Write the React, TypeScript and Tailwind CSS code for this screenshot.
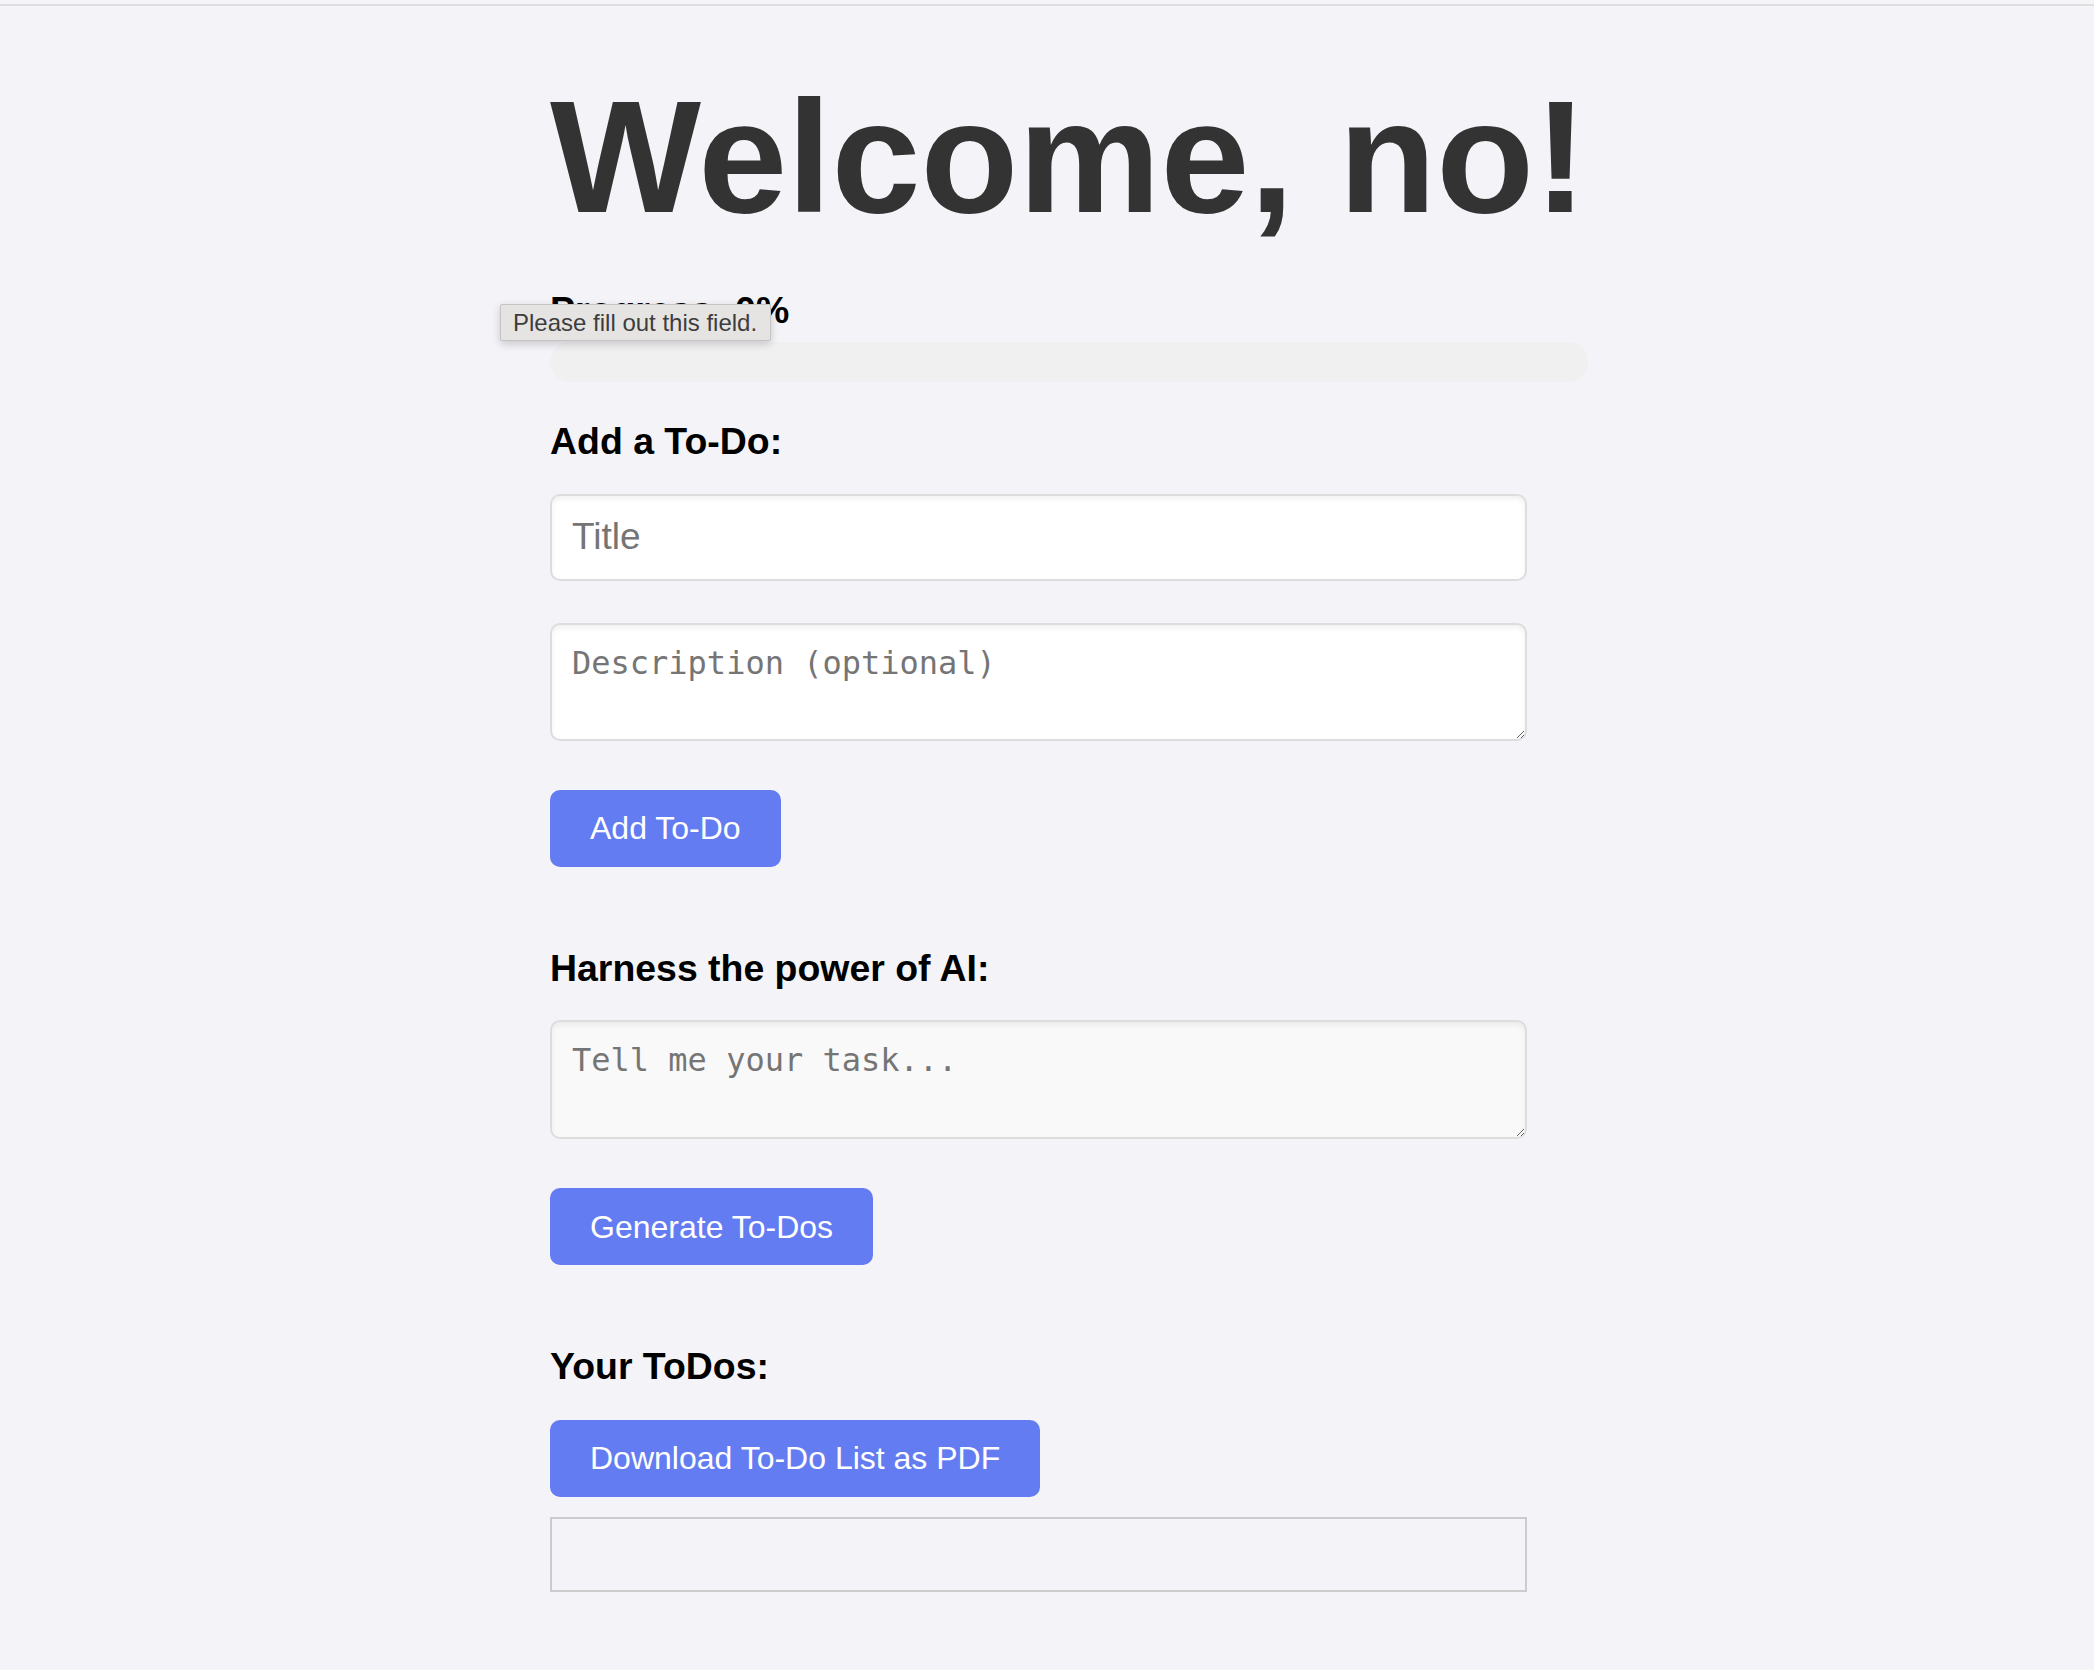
import React from 'react';

const sans = "font-['Liberation_Sans',Arial,sans-serif]";
const mono = "font-['DejaVu_Sans_Mono',monospace]";

function Button({ label }: { label: string }) {
    return (
        <button
            type="button"
            className={`${sans} block h-[77px] rounded-[10px] bg-[#647cf2] px-[40px] text-[32px] leading-none text-white`}
        >
            {label}
        </button>
    );
}

export default function App() {
    return (
        <div className={`${sans} min-h-screen bg-[#f4f4f8]`}>
            <div className="h-[4px]" />
            <div className="border-t-2 border-[#dedede]">
                <div className="ml-[550px] w-[977px] pb-[80px]">
                    <h1 className="mt-[71px] whitespace-nowrap text-[160px] font-bold leading-none text-[#333333]">
                        Welcome, no!
                    </h1>

                    <div className="relative mt-[55px]">
                        <h3 className="text-[37.44px] font-bold leading-none text-black">Progress: 0%</h3>
                        <div className="absolute left-[-50px] top-[12px] flex h-[37px] w-[271px] items-center whitespace-nowrap rounded-[2px] border border-[#c4c4c4] bg-[#e5e4e2] px-[12px] text-[24px] leading-none text-[#3d3d3d] shadow-[0_3px_8px_rgba(0,0,0,0.18)]">
                            Please fill out this field.
                        </div>
                    </div>
                    <div className="mt-[13px] h-[40px] w-[1038px] rounded-full bg-[#f0f0f0]" />

                    <h3 className="mt-[41px] text-[37.44px] font-bold leading-none text-black">Add a To-Do:</h3>
                    <input
                        type="text"
                        placeholder="Title"
                        className="mt-[33px] block h-[87px] w-full rounded-[10px] border-2 border-[#dddddd] bg-white px-[20px] text-[37px] text-black shadow-[inset_0_3px_5px_rgba(0,0,0,0.06)] outline-none placeholder:text-[#757575]"
                    />
                    <textarea
                        placeholder="Description (optional)"
                        rows={2}
                        className={`${mono} mt-[42px] block h-[118px] w-full rounded-[10px] border-2 border-[#dddddd] bg-white p-[20px] text-[32px] leading-[1.164] shadow-[inset_0_3px_5px_rgba(0,0,0,0.06)] outline-none placeholder:text-[#757575]`}
                    />
                    <div className="mt-[49px]">
                        <Button label="Add To-Do" />
                    </div>

                    <h3 className="mt-[83px] text-[37.44px] font-bold leading-none text-black">Harness the power of AI:</h3>
                    <textarea
                        placeholder="Tell me your task..."
                        rows={2}
                        className={`${mono} mt-[33px] block h-[119px] w-full rounded-[10px] border-2 border-[#dddddd] bg-[#f9f9f9] p-[20px] text-[32px] leading-[1.164] shadow-[inset_0_3px_5px_rgba(0,0,0,0.06)] outline-none placeholder:text-[#757575]`}
                    />
                    <div className="mt-[49px]">
                        <Button label="Generate To-Dos" />
                    </div>

                    <h3 className="mt-[83px] text-[37.44px] font-bold leading-none text-black">Your ToDos:</h3>
                    <div className="mt-[34px]">
                        <Button label="Download To-Do List as PDF" />
                    </div>
                    <ul className="mt-[20px] h-[75px] w-full border-2 border-[#cccccc]" />
                </div>
            </div>
        </div>
    );
}
